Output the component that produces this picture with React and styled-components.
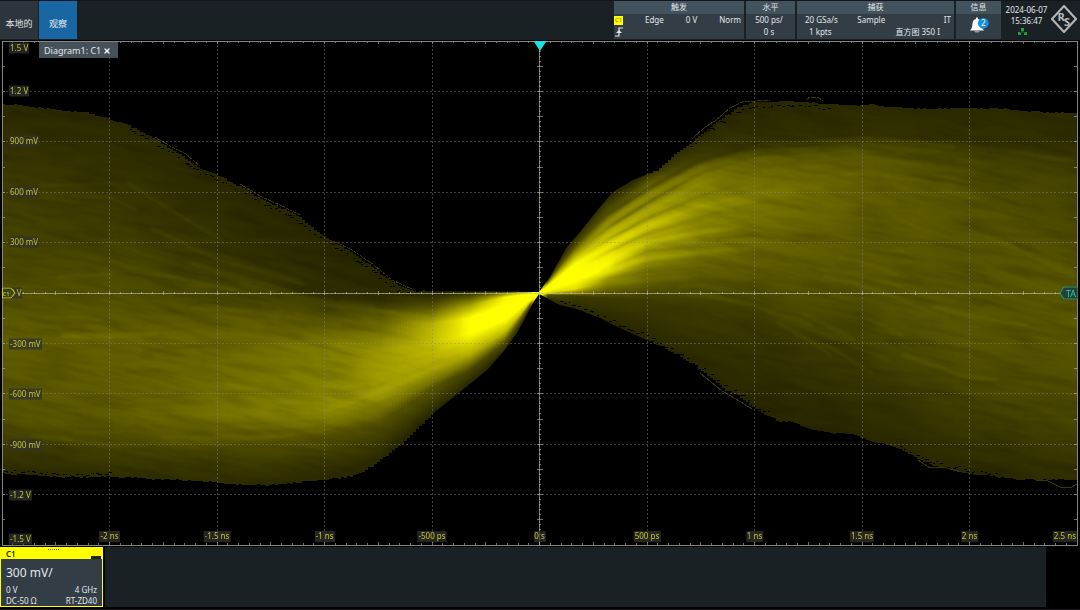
import React from 'react';
import styled, { createGlobalStyle } from 'styled-components';
import { X } from 'lucide-react';

const GlobalStyle = createGlobalStyle`
  * {
    box-sizing: border-box;
  }

  body {
    margin: 0;
    background: #000;
    color: #e2e6e8;
    font-family: "Noto Sans", "Noto Sans CJK SC", sans-serif;
    font-size: 8px;
    line-height: 12px;
  }

  button {
    border: 0;
    padding: 0;
    color: inherit;
    font: inherit;
    cursor: pointer;
  }
`;

const Screen = styled.div`
  display: flex;
  flex-direction: column;
  min-height: 100vh;
`;

const TopBar = styled.header`
  display: flex;
  height: 40px;
  padding: 0 3px 1px 0;
  gap: 1px;
  background: #1a2125;
  border-top: 1px solid #15131b;
`;

const TabButton = styled.button`
  width: 38px;
  padding-top: 8px;
  font-size: 9px;
  background: ${(p) => (p.$active ? '#1866a3' : '#2b353b')};
`;

const Spacer = styled.div`
  flex: 1;
`;

const Panel = styled.section`
  display: flex;
  flex-direction: column;
  width: ${(p) => p.$width}px;
  margin-right: 1px;
  background: #323d46;
`;

const PanelTitle = styled.h2`
  margin: 0;
  height: 13px;
  background: #43535e;
  font-size: 8px;
  font-weight: 400;
  text-align: center;
`;

const PanelRow = styled.div`
  display: flex;
  align-items: center;
  justify-content: ${(p) => p.$justify || 'space-between'};
  height: 12px;
  padding: 0 ${(p) => p.$end || 3}px 0 ${(p) => p.$start || 0}px;
`;

const SourceChip = styled.span`
  width: 9px;
  height: 9px;
  background: #ffff00;
  color: #6d6d00;
  font-size: 6px;
  line-height: 9px;
  text-align: center;
`;

const BellButton = styled.button`
  flex: 1;
  background: none;
`;

const Clock = styled.div`
  display: flex;
  flex-direction: column;
  align-items: center;
  width: 47px;
  padding-top: 3px;
  line-height: 11px;

  & > svg
  {
    margin: 1px 8px 0 0;
  }
`;

const LogoBox = styled.div`
  display: flex;
  align-items: center;
  width: 26px;
  padding-bottom: 3px;
`;

const Plot = styled.main`
  position: relative;
  display: flex;
  flex: 1;
  min-height: 300px;

  & > svg
  {
    position: absolute;
    inset: 0;
    width: 100%;
    height: 100%;
  }
`;

const DiagramTab = styled.div`
  position: relative;
  display: flex;
  align-items: center;
  align-self: flex-start;
  gap: 2px;
  height: 16px;
  margin: 2px 0 0 39px;
  padding: 2px 7px 0 5px;
  background: #455158;
  font-size: 9px;
`;

const CloseButton = styled.button`
  display: flex;
  background: none;
  color: #fff;
`;

const AxisLabel = styled.span`
  position: absolute;
  padding: 0 1px;
  height: 11px;
  line-height: 10px;
  color: #c3c32e;
  background: rgba(50, 50, 48, 0.75);
  white-space: nowrap;
`;

const VoltLabel = styled(AxisLabel)`
  left: 9px;
  transform: translateY(-50%);
`;

const TimeLabel = styled(AxisLabel)`
  bottom: 4px;
  transform: translateX(${(p) => (p.$last ? '-100%' : '-50%')});
`;

const Marker = styled.div`
  position: absolute;
  top: 50%;
  left: ${(p) => (p.$side === 'left' ? '2px' : 'auto')};
  right: ${(p) => (p.$side === 'right' ? '2px' : 'auto')};
  display: flex;
  transform: translateY(-50%);
`;

const TriggerPoint = styled.div`
  position: absolute;
  top: 0;
  left: 50%;
  display: flex;
  transform: translateX(-50%);
`;

const BottomBar = styled.footer`
  display: flex;
  gap: 2px;
  height: 64px;
  padding: 1px 3px 2px 0;
  border-bottom: 1px solid #1b1419;
`;

const ChannelCard = styled.section`
  display: flex;
  flex-direction: column;
  width: 103px;
  border: 1px solid #ffff00;
  background: #323d46;
`;

const ChannelHead = styled.div`
  display: grid;
  grid-template-columns: 1fr auto 1fr;
  height: 11px;
  padding: 0 1px 0 5px;
  background: #ffff00;
  color: #25250a;
  line-height: 11px;
  font-weight: 600;
`;

const Grip = styled.svg`
  display: block;
`;

const Coupling = styled.span`
  align-self: end;
  justify-self: end;
  width: 10px;
  height: 3px;
  background: #25250a;
`;

const ChannelScale = styled.div`
  padding: 6px 5px 3px;
  font-size: 12px;
  line-height: 16px;
`;

const ChannelRow = styled.div`
  display: flex;
  justify-content: space-between;
  padding: 0 5px;
  line-height: 11px;
`;

const Tray = styled.div`
  flex: 1;
  margin-right: 31px;
  background: #1a2125;
`;

// plot geometry, in the user units of the svg
const LEFT = 2;
const RIGHT = 1077;
const TOP = 41;
const BOTTOM = 545;
const MID_X = 539.5;
const MID_Y = 293;
const DIV_X = 107.5;
const DIV_Y = 50.4;

const UPPER = [
  [2, 105], [20, 105], [40, 108], [60, 111], [82, 112], [100, 116], [125, 124],
  [150, 137], [170, 149], [183, 157], [200, 169], [217, 175], [240, 187],
  [262, 200], [280, 208], [298, 217], [312, 228], [324, 237], [350, 252],
  [372, 268], [395, 285], [412, 291], [539, 292], [550, 277], [567, 247],
  [580, 232], [600, 207], [613, 192], [633, 180], [657, 170], [670, 158],
  [690, 143], [713, 124], [737, 107], [750, 103], [773, 102], [787, 101],
  [813, 103], [840, 105], [873, 105], [907, 108], [970, 108], [1007, 109],
  [1017, 111], [1077, 113],
];

const LOWER = [
  [2, 474], [27, 475], [63, 477], [110, 477], [153, 479], [200, 481],
  [243, 485], [277, 485], [307, 481], [333, 479], [352, 476], [370, 467],
  [385, 456], [400, 445], [432, 414], [450, 400], [487, 370], [503, 352],
  [517, 333], [533, 303], [539, 294], [560, 305], [577, 309], [600, 318],
  [620, 328], [640, 337], [660, 346], [677, 355], [700, 370], [725, 390],
  [738, 396], [755, 410], [778, 421], [792, 422], [802, 427], [828, 433],
  [850, 434], [870, 441], [897, 448], [930, 465], [970, 474], [1015, 479],
  [1077, 480],
];

// hit density along one column: x, then pairs of y and brightness
const PROFILES = [
  [2, [107, 44], [170, 58], [240, 72], [300, 84], [340, 96], [420, 84], [447, 60], [476, 44]],
  [110, [118, 42], [170, 52], [240, 66], [300, 84], [340, 100], [420, 94], [455, 62], [482, 44]],
  [217, [175, 42], [230, 50], [270, 60], [300, 76], [335, 104], [415, 116], [450, 72], [484, 46]],
  [324, [237, 40], [270, 44], [298, 50], [315, 78], [345, 126], [413, 142], [437, 85], [478, 44]],
  [380, [275, 40], [292, 42], [303, 54], [320, 98], [350, 158], [392, 162], [425, 80], [458, 42]],
  [432, [292, 36], [298, 50], [308, 90], [324, 182], [345, 200], [368, 172], [390, 84], [414, 40]],
  [470, [292, 44], [297, 84], [306, 170], [318, 255], [334, 255], [354, 180], [370, 70], [384, 40]],
  [505, [292, 80], [294, 150], [297, 245], [305, 255], [320, 255], [332, 190], [342, 80], [351, 44]],
  [530, [292, 180], [293, 255], [294, 255], [296, 255], [300, 255], [302, 220], [304, 120], [307, 60]],
  [540, [290, 255], [291, 255], [292, 255], [293, 255], [294, 255], [295, 255], [296, 255], [297, 255]],
  [548, [280, 60], [282, 110], [284, 200], [286, 255], [291, 255], [293, 220], [295, 80], [298, 50]],
  [575, [238, 46], [246, 76], [256, 180], [264, 255], [281, 255], [289, 230], [296, 60], [308, 42]],
  [607, [198, 44], [212, 80], [230, 165], [247, 235], [268, 255], [282, 140], [298, 60], [319, 42]],
  [647, [173, 44], [186, 100], [205, 145], [228, 195], [250, 168], [278, 105], [300, 60], [341, 40]],
  [700, [135, 40], [158, 64], [175, 128], [210, 152], [245, 124], [272, 95], [305, 64], [370, 40]],
  [755, [103, 40], [143, 50], [158, 94], [195, 126], [240, 108], [280, 86], [320, 58], [408, 40]],
  [862, [105, 44], [135, 52], [150, 82], [180, 100], [250, 92], [300, 82], [370, 58], [436, 42]],
  [970, [110, 44], [140, 50], [160, 74], [200, 86], [270, 86], [340, 88], [420, 62], [473, 42]],
  [1077, [114, 44], [150, 52], [180, 68], [240, 76], [300, 94], [360, 86], [420, 72], [480, 48]],
];

const lerp = (a, b, t) => a + (b - a) * t;

const makeRandom = (seed) => () => {
  seed = (seed * 16807) % 2147483647;
  return seed / 2147483647;
};

const valueAt = (points, x) => {
  let i = 0;
  while (i < points.length - 2 && points[i + 1][0] < x) i += 1;
  const [x0, y0] = points[i];
  const [x1, y1] = points[i + 1];
  return lerp(y0, y1, (x - x0) / (x1 - x0));
};

const profileAt = (x) => {
  let i = 0;
  while (i < PROFILES.length - 2 && PROFILES[i + 1][0] < x) i += 1;
  const a = PROFILES[i];
  const b = PROFILES[i + 1];
  const t = (x - a[0]) / (b[0] - a[0]);
  return a.slice(1).map(([y, v], k) => [lerp(y, b[k + 1][0], t), lerp(v, b[k + 1][1], t)]);
};

const edgePoints = (points, seed) => {
  const random = makeRandom(seed);
  const out = [];
  for (let x = LEFT; x <= RIGHT; x += 3) {
    const near = Math.abs(x - MID_X) < 110;
    const jitter = (random() - 0.5) * 1.4;
    if (near) {
      out.push([x, valueAt(points, x).toFixed(1)]);
    } else {
      const y = Math.round(valueAt(points, x) + jitter);
      out.push([x, y], [Math.min(x + 3, RIGHT), y]);
    }
  }
  return out;
};

const envelope = `M${[...edgePoints(UPPER, 17), ...edgePoints(LOWER, 43).reverse()].join('L')}Z`;

// columns get narrower around the trigger point, where the slope is steep
const strips = [];
for (let x = LEFT; x < RIGHT;) {
  const width = x >= 428 && x < 710 ? 1 : 3;
  strips.push({ x, width, stops: profileAt(x + width / 2) });
  x += width;
}

// a line that keeps its level s inside the density profile
const flowLine = (from, to, s, bend = 0) => {
  const points = [];
  for (let x = from; x <= to; x += 6) {
    const stops = profileAt(x);
    const level = Math.max(0, Math.min(6.99, s + (bend * (x - from)) / (to - from)));
    const k = Math.floor(level);
    points.push(`${x},${lerp(stops[k][0], stops[k + 1][0], level - k).toFixed(1)}`);
  }
  return `M${points.join('L')}`;
};

const makeStreaks = () => {
  const random = makeRandom(2024);
  const out = [];
  for (let i = 0; i < 260; i += 1) {
    const onRight = random() > 0.5;
    const length = 40 + random() * 90;
    const from = onRight ? 620 + random() * 400 : 4 + random() * 400;
    const end = Math.min(from + length, onRight ? RIGHT : 470);
    out.push({
      d: flowLine(from, end, 1 + random() * 5, (random() - 0.3) * 0.3),
      color: random() > 0.5 ? '#d8d800' : '#141400',
      width: 1 + random() * 3,
      opacity: 0.03 + random() * 0.05,
    });
  }
  return out;
};

const streaks = makeStreaks();

const RIPPLES = [
  [584, 740, 1.2, '#1c1a00', 3, 0.4],
  [584, 800, 1.55, '#e6e600', 4, 0.2],
  [584, 740, 1.9, '#1c1a00', 3, 0.4],
  [584, 780, 2.25, '#e6e600', 4, 0.2],
  [584, 740, 2.6, '#2c2a00', 3, 0.35],
  [584, 780, 2.9, '#f4f400', 4, 0.3],
  [584, 740, 3.25, '#3c3a00', 3, 0.3],
  [584, 740, 3.65, '#ffff00', 5, 0.35],
  [600, 740, 4.05, '#3c3a00', 3, 0.2],
  [584, 740, 4.3, '#ffff00', 5, 0.25],
  [600, 780, 4.75, '#2c2a00', 3, 0.2],
  [600, 780, 5.1, '#c8c800', 4, 0.12],
];

// stray acquisitions just along the edges
const makeStrays = () => {
  const random = makeRandom(777);
  const out = [];
  const spans = [
    [UPPER, 130, 416, 1], [UPPER, 690, 830, 1],
    [LOWER, 560, 770, -1], [LOWER, 900, 1000, -1], [LOWER, 4, 110, -1],
  ];
  spans.forEach(([edge, from, to, inward]) => {
    for (let x = from; x < to; x += 2 + Math.floor(random() * 6)) {
      const offset = 2 + Math.round(random() * 3);
      out.push({
        x,
        y: Math.round(valueAt(edge, x)) + inward * offset,
        width: 1 + Math.round(random() * 3),
      });
    }
  });
  return out;
};

const strays = makeStrays();

const range = (count) => Array.from({ length: count }, (_, i) => i);

const Waveform = () => (
  <g>
    <defs>
      <clipPath id="envelope">
        <path d={envelope} />
      </clipPath>
      <filter id="soften" x="-5%" y="-5%" width="110%" height="110%">
        <feGaussianBlur stdDeviation="1.6" />
      </filter>
      <filter id="grain" x="0" y="0" width="100%" height="100%">
        <feTurbulence type="fractalNoise" baseFrequency="0.018 0.11" numOctaves="3" seed="4" />
        <feColorMatrix values="0 0 0 0 0  0 0 0 0 0  0 0 0 0 0  1.6 0 0 0 -0.62" />
      </filter>
      <linearGradient id="grainFade" gradientUnits="userSpaceOnUse" x1="340" x2="740" y1="0" y2="0">
        <stop offset="0" stopColor="#fff" />
        <stop offset="0.3" stopColor="#000" />
        <stop offset="0.65" stopColor="#000" />
        <stop offset="1" stopColor="#fff" />
      </linearGradient>
      <mask id="grainMask" maskUnits="userSpaceOnUse" x="0" y="40" width="1080" height="506">
        <rect y="40" width="1080" height="506" fill="url(#grainFade)" />
      </mask>
      <linearGradient id="rippleFade" gradientUnits="userSpaceOnUse" x1="582" x2="780" y1="0" y2="0">
        <stop offset="0" stopColor="#000" />
        <stop offset="0.2" stopColor="#fff" />
        <stop offset="0.4" stopColor="#ccc" />
        <stop offset="0.75" stopColor="#333" />
        <stop offset="1" stopColor="#000" />
      </linearGradient>
      <mask id="rippleMask" maskUnits="userSpaceOnUse" x="560" y="40" width="300" height="506">
        <rect x="560" y="40" width="300" height="506" fill="url(#rippleFade)" />
      </mask>
      {strips.map(({ x, stops }) => {
        const y1 = stops[0][0];
        const y2 = stops[stops.length - 1][0];
        return (
          <linearGradient key={x} id={`strip${x}`} gradientUnits="userSpaceOnUse" x1="0" x2="0" y1={y1} y2={y2}>
            {stops.map(([y, v], k) => (
              <stop key={k} offset={(y - y1) / (y2 - y1)} stopColor={`rgb(${Math.round(v)}, ${Math.round(v < 240 ? v * 0.97 : v)}, 0)`} />
            ))}
          </linearGradient>
        );
      })}
    </defs>
    <g clipPath="url(#envelope)">
      <g shapeRendering="crispEdges">
        {strips.map(({ x, width }) => (
          <rect key={x} x={x} y="90" width={width} height="410" fill={`url(#strip${x})`} />
        ))}
      </g>
      <g filter="url(#soften)" fill="none">
        {streaks.map((s, i) => (
          <path key={i} d={s.d} stroke={s.color} strokeWidth={s.width} opacity={s.opacity} />
        ))}
      </g>
      <g mask="url(#rippleMask)">
        <g filter="url(#soften)" fill="none">
          {RIPPLES.map(([from, to, level, color, width, opacity]) => (
            <path key={`${from}-${level}`} d={flowLine(from, to, level)} stroke={color} strokeWidth={width} opacity={opacity} />
          ))}
        </g>
      </g>
      <g mask="url(#grainMask)">
        <g transform="rotate(12 220 250)">
          <rect x="-60" y="40" width="600" height="480" filter="url(#grain)" opacity="0.2" />
        </g>
        <g transform="rotate(12 870 290)">
          <rect x="600" y="20" width="560" height="540" filter="url(#grain)" opacity="0.2" />
        </g>
      </g>
    </g>
    <g shapeRendering="crispEdges">
      {strays.map((s) => (
        <rect key={`${s.x}-${s.y}`} x={s.x} y={s.y} width={s.width} height="1" fill="#000" />
      ))}
    </g>
    <g fill="none" stroke="#3a3800" shapeRendering="crispEdges">
      <path d="M155 137L172 147L186 154L200 166M240 184L262 197L282 206L300 215M336 242L352 250L374 265L392 280L412 289" strokeDasharray="3 1" />
      <path d="M806 100L810 97L818 97L823 101M692 139L704 128L716 120L730 108L742 102L770 100" strokeDasharray="5 1" />
      <path d="M700 373L722 391L736 399L752 409M918 460L930 468L944 467L960 472M1036 480L1048 481L1060 487L1070 488L1077 484" />
    </g>
  </g>
);

const Grid = () => (
  <g fill="none" shapeRendering="crispEdges">
    <g stroke="#8a8a8a" strokeOpacity="0.45" strokeDasharray="2 2">
      {range(9).map((i) => {
        const x = LEFT + DIV_X * (i + 1);
        return <line key={`x${i}`} x1={x} x2={x} y1={TOP} y2={BOTTOM} />;
      })}
      {range(9).map((i) => {
        const y = TOP + DIV_Y * (i + 1);
        return <line key={`y${i}`} x1={LEFT} x2={RIGHT} y1={y} y2={y} />;
      })}
    </g>
    <g stroke="#c8c8b4" strokeOpacity="0.55">
      <line x1={LEFT} x2={RIGHT} y1={MID_Y} y2={MID_Y} />
      <line x1={MID_X} x2={MID_X} y1={TOP} y2={BOTTOM} />
      {range(99).map((i) => {
        const x = LEFT + (DIV_X / 10) * (i + 1);
        const size = (i + 1) % 5 === 0 ? 2 : 1;
        return <path key={i} d={`M${x} ${MID_Y - size}V${MID_Y + size}M${x} ${TOP}v${size + 1}M${x} ${BOTTOM}v${-size - 1}`} />;
      })}
      {range(99).map((i) => {
        const y = TOP + (DIV_Y / 10) * (i + 1);
        const major = (i + 1) % 5 === 0;
        return (
          <path
            key={i}
            d={`M${MID_X - (major ? 3 : 1)} ${y}H${MID_X + (major ? 3 : 1)}${major ? `M${LEFT} ${y}h3M${RIGHT} ${y}h-3` : ''}`}
          />
        );
      })}
    </g>
    <rect x={LEFT} y={TOP} width={RIGHT - LEFT} height={BOTTOM - TOP} stroke="#858585" />
  </g>
);

const BellIcon = () => (
  <svg width="22" height="18" viewBox="0 0 22 18" aria-hidden="true">
    <path d="M2 14.5C4 12.5 4.2 11 4.4 8C4.6 5 6 3.4 8 3L8.2 1.6H9.8L10 3C12 3.4 13.4 5 13.6 8C13.8 11 14 12.5 16 14.5Z" fill="#fff" />
    <path d="M6.5 15.4H11.5C11 16.6 7 16.6 6.5 15.4Z" fill="#fff" />
    <circle cx="15.3" cy="7.3" r="5.4" fill="#0f8fe6" />
    <text x="15.3" y="10.2" fontSize="8" fill="#fff" textAnchor="middle">2</text>
  </svg>
);

const EdgeIcon = () => (
  <svg width="10" height="10" viewBox="0 0 10 10" fill="none" stroke="#e2e6e8" aria-hidden="true">
    <path d="M1 9H5V1H9" strokeWidth="1.2" />
    <path d="M2 6L5 3L8 6Z" fill="#e2e6e8" stroke="none" />
  </svg>
);

const NetworkIcon = () => (
  <svg width="11" height="9" viewBox="0 0 11 9" aria-hidden="true">
    <path d="M4 1H7V4H4ZM1 5H4V8H1ZM7 5H10V8H7Z" fill="#1fa336" />
    <path d="M5.5 4V5.5M2.5 6L5.5 4.5L8.5 6" stroke="#156b26" fill="none" />
  </svg>
);

const Logo = () => (
  <svg width="26" height="28" viewBox="0 0 26 28" role="img" aria-label="R&S">
    <path d="M13 1L25 14L13 27L1 14Z" fill="none" stroke="#b4b8ba" strokeWidth="2" />
    <path d="M9 12L17 17" stroke="#b4b8ba" strokeWidth="1" />
    <text x="10" y="16" fontSize="11" fontWeight="700" fill="#b4b8ba" textAnchor="middle">R</text>
    <text x="16" y="21" fontSize="11" fontWeight="700" fill="#b4b8ba" textAnchor="middle">S</text>
  </svg>
);

const VOLTS = [
  ['1.5 V', 1.5], ['1.2 V', 10], ['900 mV', 20], ['600 mV', 30], ['300 mV', 40], ['0 V', 50],
  ['-300 mV', 60], ['-600 mV', 70], ['-900 mV', 80], ['-1.2 V', 90], ['-1.5 V', 98.7],
];

const TIMES = ['-2 ns', '-1.5 ns', '-1 ns', '-500 ps', '0 s', '500 ps', '1 ns', '1.5 ns', '2 ns', '2.5 ns'];

export default function App() {
  return (
    <Screen>
      <GlobalStyle />
      <TopBar>
        <TabButton type="button">本地的</TabButton>
        <TabButton type="button" $active>观察</TabButton>
        <Spacer />
        <Panel $width={130}>
          <PanelTitle>触发</PanelTitle>
          <PanelRow>
            <SourceChip>C1</SourceChip>
            <span>Edge</span>
            <span>0 V</span>
            <span>Norm</span>
          </PanelRow>
          <PanelRow>
            <EdgeIcon />
          </PanelRow>
        </Panel>
        <Panel $width={49}>
          <PanelTitle>水平</PanelTitle>
          <PanelRow $justify="center">500 ps/</PanelRow>
          <PanelRow $justify="center">0 s</PanelRow>
        </Panel>
        <Panel $width={157}>
          <PanelTitle>捕获</PanelTitle>
          <PanelRow $start={8}>
            <span>20 GSa/s</span>
            <span>Sample</span>
            <span />
            <span />
            <span>IT</span>
          </PanelRow>
          <PanelRow $start={12} $end={14}>
            <span>1 kpts</span>
            <span>直方图 350 I</span>
          </PanelRow>
        </Panel>
        <Panel $width={45}>
          <PanelTitle>信息</PanelTitle>
          <BellButton type="button" aria-label="信息">
            <BellIcon />
          </BellButton>
        </Panel>
        <Clock>
          <span>2024-06-07</span>
          <span>15:36:47</span>
          <NetworkIcon />
        </Clock>
        <LogoBox>
          <Logo />
        </LogoBox>
      </TopBar>
      <Plot>
        <svg viewBox="0 40 1080 506" preserveAspectRatio="none" aria-hidden="true">
          <Waveform />
          <Grid />
        </svg>
        <DiagramTab>
          Diagram1: C1
          <CloseButton type="button" aria-label="Close">
            <X size={8} strokeWidth={4} />
          </CloseButton>
        </DiagramTab>
        {VOLTS.map(([label, top]) => (
          <VoltLabel key={label} style={{ top: `${top}%` }}>{label}</VoltLabel>
        ))}
        {TIMES.map((label, i) => (
          <TimeLabel key={label} $last={i === 9} style={{ left: `${((LEFT + DIV_X * (i + 1)) / 1080) * 100}%` }}>
            {label}
          </TimeLabel>
        ))}
        <TriggerPoint>
          <svg width="13" height="12" viewBox="0 0 13 12" aria-hidden="true">
            <path d="M0 1H13L6.5 11Z" fill="#19e3e3" />
          </svg>
        </TriggerPoint>
        <Marker $side="left">
          <svg width="14" height="11" viewBox="0 0 14 11">
            <path d="M0.5 0.5H9L13 5.5L9 10.5H0.5Z" fill="#323d1a" fillOpacity="0.7" stroke="#c8c81e" />
            <text x="4" y="8" fontSize="6" fill="#d6d62a" textAnchor="middle">C1</text>
          </svg>
        </Marker>
        <Marker $side="right">
          <svg width="19" height="13" viewBox="0 0 19 13">
            <path d="M18.5 0.5H5L1 6.5L5 12.5H18.5" fill="#23423a" stroke="#1c9c80" />
            <text x="12" y="10" fontSize="9" fill="#2fc9ac" textAnchor="middle">TA</text>
          </svg>
        </Marker>
      </Plot>
      <BottomBar>
        <ChannelCard>
          <ChannelHead>
            <span>C1</span>
            <Grip width="11" height="3" viewBox="0 0 11 3" aria-hidden="true">
              <path d="M0 1.5H11" stroke="#6d6d00" strokeDasharray="1 1" />
            </Grip>
            <Coupling />
          </ChannelHead>
          <ChannelScale>300 mV/</ChannelScale>
          <ChannelRow>
            <span>0 V</span>
            <span>4 GHz</span>
          </ChannelRow>
          <ChannelRow>
            <span>DC-50 Ω</span>
            <span>RT-ZD40</span>
          </ChannelRow>
        </ChannelCard>
        <Tray />
      </BottomBar>
    </Screen>
  );
}
